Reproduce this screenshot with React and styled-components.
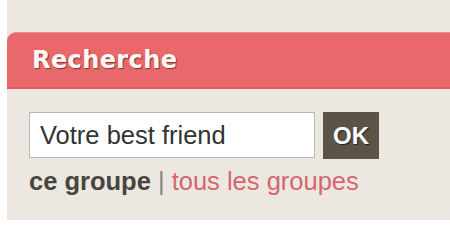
import React from "react";
import styled, { createGlobalStyle } from "styled-components";

const GlobalStyle = createGlobalStyle`
  body {
    margin: 0;
    background: #ffffff;
    font-family: "Liberation Sans", Arial, sans-serif;
  }
`;

const Page = styled.div`
  padding-left: 7px;
  width: 450px;
  box-sizing: border-box;
  overflow: hidden;
`;

const Panel = styled.div`
  background: #ece8e1;
  padding-top: 32px;
  height: 220px;
  box-sizing: border-box;
`;

const Header = styled.div`
  height: 57px;
  background: #e9686b;
  border-radius: 9px 0 0 0;
  border-top: 1px solid #f08a8a;
  border-bottom: 2px solid #dc5e61;
  box-sizing: border-box;
  display: flex;
  align-items: center;
  padding-left: 25px;
`;

const Title = styled.h2`
  margin: 0;
  font-family: "DejaVu Sans", sans-serif;
  font-weight: bold;
  font-size: 24px;
  letter-spacing: 0.4px;
  color: #fff8f4;
  text-shadow: 1px 1px 1px #7a3a38;
`;

const Body = styled.div`
  padding: 23px 0 0 22px;
`;

const SearchRow = styled.form`
  display: flex;
  gap: 8px;
  margin: 0;
`;

const Input = styled.input`
  width: 286px;
  height: 46px;
  box-sizing: border-box;
  border: 1px solid #b9b6b1;
  background: #ffffff;
  padding: 0 10px;
  font-family: "Liberation Sans", Arial, sans-serif;
  font-size: 25.5px;
  color: #333333;
  outline: none;
`;

const Button = styled.button`
  width: 56px;
  height: 47px;
  border: none;
  background: #5a5448;
  color: #ffffff;
  font-family: "Liberation Sans", Arial, sans-serif;
  font-weight: bold;
  font-size: 24px;
  text-shadow: 1px 1px 1px #222;
  cursor: pointer;
  padding: 0;
`;

const Scope = styled.div`
  margin-top: 8px;
  font-size: 25.5px;
  color: #888580;
`;

const Current = styled.strong`
  color: #48453f;
`;

const Link = styled.a`
  color: #d4676c;
  text-decoration: none;
`;

export default function App() {
  return (
    <>
      <GlobalStyle />
      <Page>
        <Panel>
          <Header>
            <Title>Recherche</Title>
          </Header>
          <Body>
            <SearchRow onSubmit={(e) => e.preventDefault()}>
              <Input defaultValue="Votre best friend" />
              <Button type="submit">OK</Button>
            </SearchRow>
            <Scope>
              <Current>ce groupe</Current> | <Link href="#">tous les groupes</Link>
            </Scope>
          </Body>
        </Panel>
      </Page>
    </>
  );
}
